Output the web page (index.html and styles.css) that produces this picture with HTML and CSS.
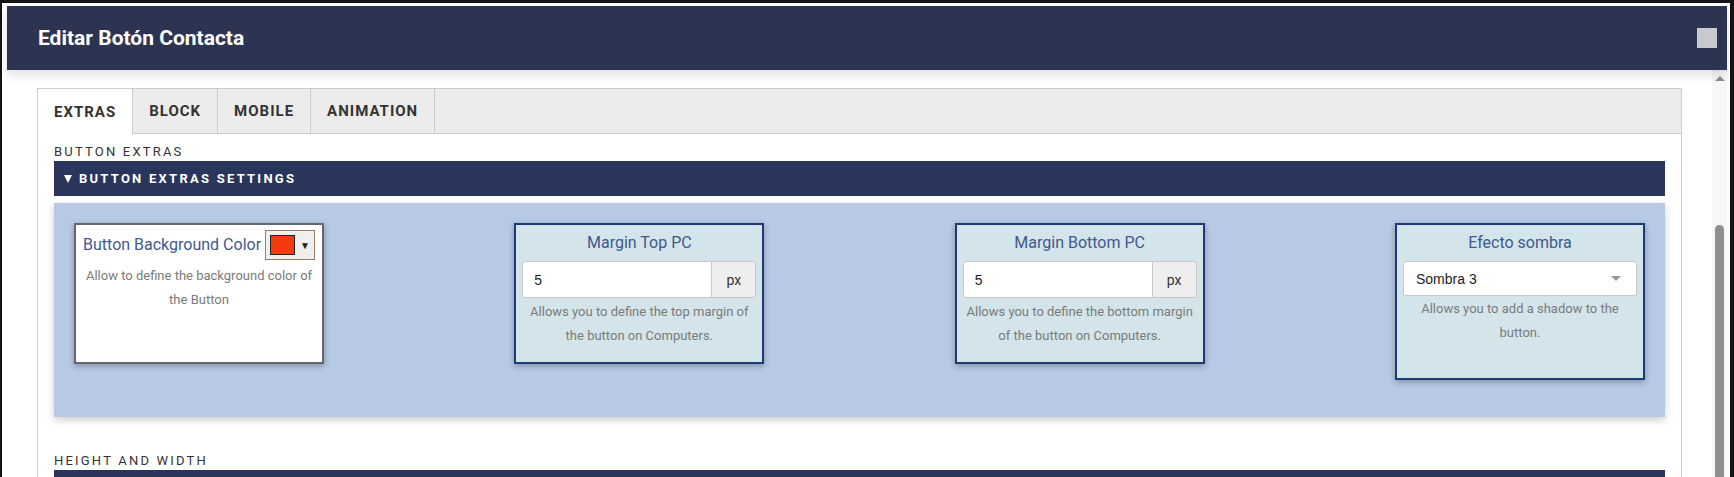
FILE: index.html
```html
<!DOCTYPE html>
<html lang="es">
<head>
<meta charset="utf-8">
<title>Editar Botón Contacta</title>
<link rel="stylesheet" href="styles.css">
</head>
<body>
<div class="modal">
  <div class="modal-header">
    <h1 class="modal-title">Editar Botón Contacta</h1>
    <span class="close-box"></span>
  </div>
  <div class="modal-main">
    <div class="content">
      <div class="tabs">
        <div class="tab-bar">
          <div class="tab active">EXTRAS</div>
          <div class="tab">BLOCK</div>
          <div class="tab">MOBILE</div>
          <div class="tab">ANIMATION</div>
        </div>
        <div class="tab-content">
          <div class="section-label">BUTTON EXTRAS</div>
          <div class="settings-bar"><span class="caret"></span>BUTTON EXTRAS SETTINGS</div>
          <div class="panel">
            <div class="card card-white">
              <div class="color-row">
                <span class="card-title">Button Background Color</span>
                <span class="picker"><span class="swatch"></span><span class="picker-arrow">▼</span></span>
              </div>
              <p class="desc">Allow to define the background color of the Button</p>
            </div>
            <div class="card card-teal">
              <div class="card-title">Margin Top PC</div>
              <div class="input-group">
                <div class="input">5</div>
                <div class="addon">px</div>
              </div>
              <p class="desc">Allows you to define the top margin of the button on Computers.</p>
            </div>
            <div class="card card-teal">
              <div class="card-title">Margin Bottom PC</div>
              <div class="input-group">
                <div class="input">5</div>
                <div class="addon">px</div>
              </div>
              <p class="desc">Allows you to define the bottom margin of the button on Computers.</p>
            </div>
            <div class="card card-teal card-tall">
              <div class="card-title">Efecto sombra</div>
              <div class="select">Sombra 3<span class="select-arrow"></span></div>
              <p class="desc desc-tight">Allows you to add a shadow to the button.</p>
            </div>
          </div>
          <div class="section-label section-label-2">HEIGHT AND WIDTH</div>
          <div class="settings-bar"></div>
        </div>
      </div>
    </div>
    <div class="scrollbar">
      <span class="scroll-up"></span>
      <span class="scroll-thumb"></span>
    </div>
  </div>
</div>
</body>
</html>
```
FILE: styles.css
```css
* { box-sizing: border-box; }
html, body { height: 100%; }
body {
  margin: 0;
  background: #141414;
  overflow: hidden;
  font-family: Roboto, "Liberation Sans", Arial, sans-serif;
}
.modal {
  margin: 3px 4px 0 2px;
  height: calc(100% - 3px);
  background: #fff;
  padding: 3px 3px 0 5px;
  display: flex;
  flex-direction: column;
}
.modal-header {
  height: 64px;
  flex: none;
  background: #2d3452;
  display: flex;
  align-items: center;
  justify-content: space-between;
  padding: 0 10px 0 31px;
  box-shadow: 0 5px 10px rgba(0,0,0,0.13);
  position: relative;
  z-index: 2;
}
.modal-title {
  margin: 0;
  color: #fff;
  font-size: 21px;
  font-weight: 700;
}
.close-box {
  width: 20px;
  height: 20px;
  background: #c8c9cf;
}
.modal-main {
  flex: 1;
  display: flex;
  min-height: 0;
}
.content {
  flex: 1;
  padding: 18px 30px 0 30px;
  overflow: hidden;
}
.scrollbar {
  width: 15px;
  flex: none;
  background: #f7f7f7;
  display: flex;
  flex-direction: column;
  align-items: center;
}
.scroll-up {
  margin-top: 6px;
  width: 0;
  height: 0;
  border-left: 5px solid transparent;
  border-right: 5px solid transparent;
  border-bottom: 5px solid #8a8a8a;
}
.scroll-thumb {
  margin-top: 144px;
  width: 9px;
  flex: 1;
  background: #8f8f8f;
  border-radius: 5px 5px 0 0;
}
.tabs {
  border: 1px solid #cccccc;
  border-bottom: none;
  height: 100%;
}
.tab-bar {
  display: flex;
  background: #ececec;
  border-bottom: 1px solid #cccccc;
  height: 45px;
}
.tab {
  padding: 0 16px;
  display: flex;
  align-items: center;
  font-size: 15px;
  font-weight: 700;
  letter-spacing: 1px;
  color: #333;
  border-right: 1px solid #cccccc;
}
.tab.active {
  background: #fff;
  margin-bottom: -1px;
}
.tab-content {
  padding: 0 16px;
}
.section-label {
  padding-top: 9px;
  line-height: 17px;
  font-size: 13px;
  letter-spacing: 2.2px;
  color: #333;
  margin-bottom: 1px;
}
.section-label-2 {
  margin-top: 26px;
}
.settings-bar {
  height: 35px;
  background: #29355a;
  color: #fff;
  display: flex;
  align-items: center;
  padding-left: 10px;
  font-size: 13px;
  font-weight: 700;
  letter-spacing: 2.25px;
}
.caret {
  width: 0;
  height: 0;
  border-left: 4.5px solid transparent;
  border-right: 4.5px solid transparent;
  border-top: 8px solid #fff;
  margin-right: 7px;
}
.panel {
  margin-top: 7px;
  background: #b8c9e5;
  padding: 20px 20px 37px 20px;
  display: flex;
  justify-content: space-between;
  align-items: flex-start;
  box-shadow: 0 3px 8px rgba(0,0,0,0.2);
}
.card {
  width: 250px;
  min-height: 141px;
  border: 2px solid;
  padding: 6px;
  text-align: center;
  box-shadow: 0 2px 6px rgba(0,0,0,0.3);
}
.card-white {
  background: #fff;
  border-color: #626773;
  padding: 5px 6px;
}
.card-teal {
  background: #d3e5ea;
  border-color: #1d3a78;
}
.card-tall {
  min-height: 157px;
}
.card-title {
  font-size: 16px;
  line-height: 24px;
  color: #41598f;
}
.card-teal .card-title {
  margin-bottom: 6px;
}
.color-row {
  display: flex;
  align-items: center;
  justify-content: center;
  gap: 4px;
}
.picker {
  display: flex;
  align-items: center;
  gap: 5px;
  height: 30px;
  padding: 0 4px;
  background: #efefef;
  border: 1px solid #9d7d5f;
}
.swatch {
  width: 25px;
  height: 20px;
  background: #f03c0f;
  border: 1px solid #222;
}
.picker-arrow {
  font-size: 10px;
  color: #222;
}
.desc {
  margin: 4px 0 0;
  font-size: 13px;
  line-height: 24px;
  color: #7a7a7a;
}
.card-teal .desc {
  margin-top: 2px;
}
.card-teal .desc-tight {
  margin-top: 1px;
}
.input-group {
  display: flex;
  height: 37px;
}
.input {
  flex: 1;
  background: #fff;
  border: 1px solid #c8c8c8;
  border-radius: 3px 0 0 3px;
  padding-left: 11px;
  display: flex;
  align-items: center;
  font-family: "Liberation Sans", Arial, sans-serif;
  font-size: 14px;
  color: #222;
  text-align: left;
}
.addon {
  width: 44px;
  background: #eee;
  border: 1px solid #c8c8c8;
  border-left: none;
  border-radius: 0 3px 3px 0;
  display: flex;
  align-items: center;
  justify-content: center;
  font-size: 14px;
  color: #333;
}
.select {
  height: 35px;
  background: #fff;
  border: 1px solid #c8c8c8;
  border-radius: 3px;
  padding: 0 15px 0 12px;
  display: flex;
  align-items: center;
  justify-content: space-between;
  font-family: "Liberation Sans", Arial, sans-serif;
  font-size: 14px;
  color: #222;
}
.select-arrow {
  width: 0;
  height: 0;
  border-left: 5px solid transparent;
  border-right: 5px solid transparent;
  border-top: 5px solid #999;
}
```
